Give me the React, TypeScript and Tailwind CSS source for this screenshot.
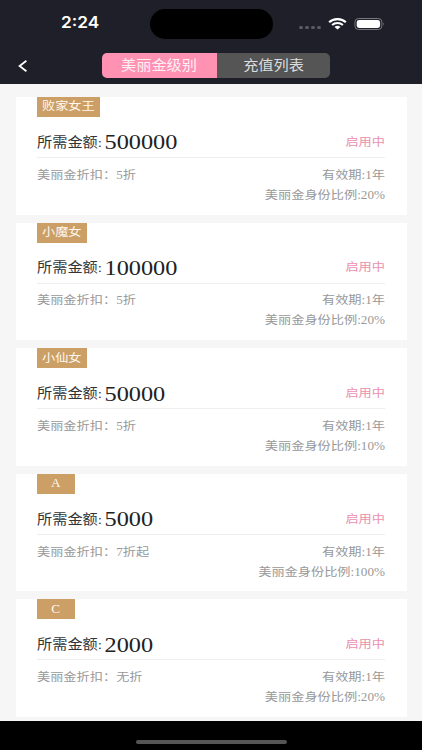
import type { ReactNode } from "react";
import clsx from "clsx";

type Level = {
  name: string;
  amount: string;
  discount: string;
  ratio: string;
};

const levels: Level[] = [
  { name: "败家女王", amount: "500000", discount: "5折", ratio: "20%" },
  { name: "小魔女", amount: "100000", discount: "5折", ratio: "20%" },
  { name: "小仙女", amount: "50000", discount: "5折", ratio: "10%" },
  { name: "A", amount: "5000", discount: "7折起", ratio: "100%" },
  { name: "C", amount: "2000", discount: "无折", ratio: "20%" },
];

// Wide, slightly flattened lettering used across the page
function Wide({ children, className }: { children: ReactNode; className?: string }) {
  return (
    <span className={clsx("inline-block scale-y-[0.88] whitespace-nowrap", className)}>
      {children}
    </span>
  );
}

function StatusBar() {
  return (
    <div className="flex h-[47px] items-center pt-px">
      <div className="w-[150px] pl-[61px]">
        <span className="inline-block scale-y-[0.9] font-['Inter'] text-[17.2px] font-semibold leading-none text-white">
          2:24
        </span>
      </div>
      <div className="h-[30px] w-[123px] rounded-full bg-black" />
      <div className="ml-[26px] flex gap-[2px] pt-[6px]">
        {[0, 1, 2, 3].map((dot) => (
          <span key={dot} className="h-[3px] w-[4px] rounded-full bg-[#5a5a62]" />
        ))}
      </div>
      <svg className="ml-[7px] h-[12px] w-[19px]" viewBox="0 0 20 12" fill="none" stroke="#fff">
        <path d="M1.2 4.2C6 -0.3 14 -0.3 18.8 4.2" strokeWidth="2.3" />
        <path d="M4.3 7C7.5 4.1 12.5 4.1 15.7 7" strokeWidth="2.1" />
        <path d="M6.8 9.1Q10 6.6 13.2 9.1L10 11.7Z" fill="#fff" stroke="none" />
      </svg>
      <svg className="ml-[7px] h-[12px] w-[32px]" viewBox="0 0 32 12">
        <rect x="0.9" y="0.5" width="27" height="11" rx="3.6" fill="none" stroke="#77777d" />
        <rect x="2.7" y="2" width="23.4" height="8" rx="2.4" fill="#fff" />
        <path d="M29.4 4.2Q31.2 6 29.4 7.8Z" fill="#77777d" />
      </svg>
    </div>
  );
}

function NavBar() {
  return (
    <div className="flex h-[37px] items-center">
      <div className="w-[102px] pl-[18px]">
        <svg className="h-[12px] w-[10px]" viewBox="0 0 10 12" fill="none" stroke="#fff" strokeWidth="1.8">
          <path d="M8.4 0.8L1.6 6L8.4 11.2" />
        </svg>
      </div>
      <div className="flex h-[25px] w-[228px] overflow-hidden rounded-[5px] text-[15.2px] leading-none">
        <button className="flex w-[115px] items-center justify-center bg-[#ff91b3] pr-px text-[#fff0f4]">
          <Wide>美丽金级别</Wide>
        </button>
        <button className="flex flex-1 items-center justify-center bg-[#555555] text-[#dddddd]">
          <Wide>充值列表</Wide>
        </button>
      </div>
    </div>
  );
}

function LevelCard({ level }: { level: Level }) {
  return (
    <section className="h-[117.5px] shrink-0 bg-white px-[21.5px] text-[13.2px] leading-none text-[#999999]">
      <div className="flex h-5 w-fit min-w-[37.5px] items-center justify-center bg-[#cc9f66] px-[5px] text-[#fff8ee]">
        <Wide>{level.name}</Wide>
      </div>
      <div className="flex h-[41px] items-center justify-between border-b border-[#eeeeee] pt-[11px]">
        <div className="flex items-center text-[#333333]">
          <Wide className="w-[67.5px] text-[15.2px]">所需金额:</Wide>
          <Wide className="text-[24.3px] text-[#222222]">{level.amount}</Wide>
        </div>
        <Wide className="text-[#ec91ae]">启用中</Wide>
      </div>
      <div className="mt-[7.5px] flex h-5 items-center justify-between">
        <Wide>美丽金折扣：{level.discount}</Wide>
        <Wide>有效期:1年</Wide>
      </div>
      <div className="flex h-5 items-center justify-end">
        <Wide>美丽金身份比例:{level.ratio}</Wide>
      </div>
    </section>
  );
}

export default function App() {
  return (
    <div className="flex h-[750px] w-[422px] flex-col overflow-hidden bg-[#f6f6f6] font-['Liberation_Serif','Noto_Sans_CJK_SC',sans-serif]">
      <header className="h-[84px] shrink-0 bg-[#1f1f29]">
        <StatusBar />
        <NavBar />
      </header>
      <main className="flex h-[637px] shrink-0 flex-col gap-[8.1px] px-[15.5px] pt-[13px]">
        {levels.map((level) => (
          <LevelCard key={level.name} level={level} />
        ))}
      </main>
      <footer className="flex h-[29px] shrink-0 items-center justify-center bg-black pt-[12px]">
        <div className="h-[4px] w-[151px] rounded-full bg-[#555555]" />
      </footer>
    </div>
  );
}
